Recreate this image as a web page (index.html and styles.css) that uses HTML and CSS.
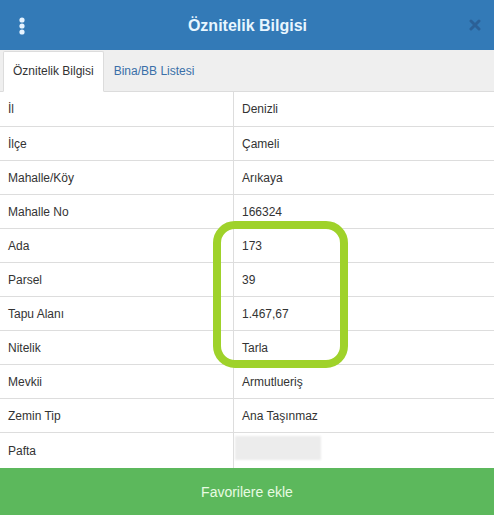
FILE: index.html
```html
<!DOCTYPE html>
<html lang="tr">

<head>
    <meta charset="UTF-8">
    <meta name="viewport" content="width=device-width, initial-scale=1.0">
    <title>Öznitelik Bilgisi</title>
    <link rel="stylesheet" href="styles.css">
</head>

<body>
    <div class="panel">
        <div class="header">
            <span class="menu">
                <svg width="8" height="20" viewBox="0 0 8 20">
                    <circle cx="4" cy="4" r="2.6" fill="#e6f3ff" />
                    <circle cx="4" cy="10" r="2.6" fill="#e6f3ff" />
                    <circle cx="4" cy="16" r="2.6" fill="#e6f3ff" />
                </svg>
            </span>
            <h2>Öznitelik Bilgisi</h2>
            <span class="close">
                <svg width="12" height="12" viewBox="0 0 12 12">
                    <path d="M2 2 L10 10 M10 2 L2 10" stroke="#2a5c92" stroke-width="3" stroke-linecap="round" />
                </svg>
            </span>
        </div>

        <div class="tabs">
            <span class="tab active">Öznitelik Bilgisi</span>
            <span class="tab">Bina/BB Listesi</span>
        </div>

        <div class="content">
            <table class="info">
                <tr><td>İl</td><td>Denizli</td></tr>
                <tr><td>İlçe</td><td>Çameli</td></tr>
                <tr><td>Mahalle/Köy</td><td>Arıkaya</td></tr>
                <tr><td>Mahalle No</td><td>166324</td></tr>
                <tr><td>Ada</td><td>173</td></tr>
                <tr><td>Parsel</td><td>39</td></tr>
                <tr><td>Tapu Alanı</td><td>1.467,67</td></tr>
                <tr><td>Nitelik</td><td>Tarla</td></tr>
                <tr><td>Mevkii</td><td>Armutlueriş</td></tr>
                <tr><td>Zemin Tip</td><td>Ana Taşınmaz</td></tr>
                <tr><td>Pafta</td><td><span class="blur"></span></td></tr>
            </table>
            <div class="mark"></div>
            <div class="watermark">sahibinden.com</div>
        </div>

        <button class="fav">Favorilere ekle</button>
    </div>
</body>

</html>
```

FILE: styles.css
```css
body {
    margin: 0;
    padding: 0;
    font-family: Arial, "Liberation Sans", sans-serif;
    background-color: #fff;
}

.panel {
    width: 494px;
    height: 515px;
    display: flex;
    flex-direction: column;
    overflow: hidden;
}

.header {
    height: 50px;
    background-color: #337ab7;
    display: flex;
    align-items: center;
    padding: 0 13px 0 18px;
}

.header h2 {
    flex: 1;
    margin: 0;
    padding-top: 1px;
    text-align: center;
    font-size: 16px;
    font-weight: bold;
    color: #e8f6ff;
}

.menu,
.close {
    display: flex;
    align-items: center;
}

.menu svg {
    margin-top: 1px;
}

.close svg {
    opacity: 0.85;
}

.tabs {
    height: 42px;
    background-color: #efefef;
    border-bottom: 1px solid #dcdcdc;
    display: flex;
    align-items: flex-end;
    padding-left: 3px;
    box-sizing: border-box;
}

.tab {
    font-size: 12px;
    color: #3a6fa8;
    padding: 12px 9px 13px 9px;
    margin-bottom: -1px;
    border: 1px solid transparent;
}

.tab.active {
    color: #333;
    background-color: #fff;
    border-color: #dcdcdc;
    border-bottom-color: #fff;
    border-radius: 2px 2px 0 0;
}

.content {
    flex: 1;
    position: relative;
}

.info {
    width: 100%;
    border-collapse: collapse;
    font-size: 12px;
    color: #333;
}

.info td {
    height: 33px;
    padding: 0 8px;
    border-bottom: 1px solid #dddddd;
}

.info tr:first-child td {
    height: 34px;
}

.info td:first-child {
    width: 217px;
    border-right: 1px solid #dddddd;
}

.info tr:last-child td {
    border-bottom: none;
    height: 35px;
}

.blur {
    display: block;
    width: 86px;
    height: 24px;
    margin-left: -7px;
    margin-top: -6px;
    background-color: #ececec;
    filter: blur(1px);
}

.mark {
    position: absolute;
    left: 213px;
    top: 129px;
    width: 119px;
    height: 131px;
    border: 8px solid #9fd22a;
    border-radius: 22px;
}

.watermark {
    position: absolute;
    left: 150px;
    top: 170px;
    font-size: 40px;
    color: rgba(0, 0, 0, 0.025);
    transform: rotate(-55deg);
    pointer-events: none;
}

.fav {
    height: 47px;
    border: none;
    background-color: #5cb85c;
    color: #e8fbe3;
    font-family: Arial, "Liberation Sans", sans-serif;
    font-size: 14px;
    cursor: pointer;
}
```
